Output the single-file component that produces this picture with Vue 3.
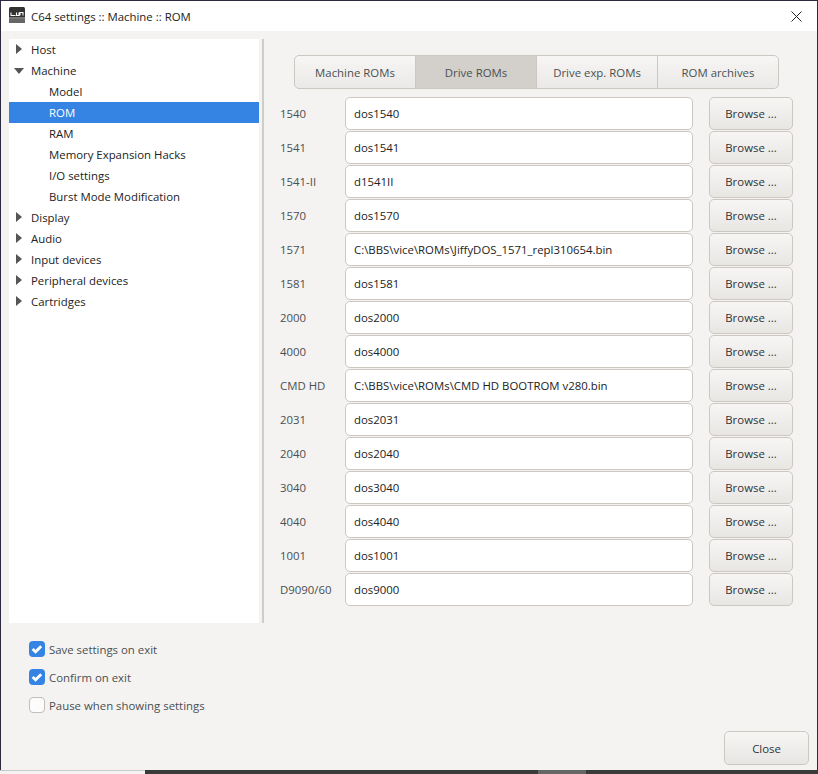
<script setup>
const tree = [
  { label: 'Host', arrow: 'right' },
  { label: 'Machine', arrow: 'down' },
  { label: 'Model', child: true },
  { label: 'ROM', child: true, active: true },
  { label: 'RAM', child: true },
  { label: 'Memory Expansion Hacks', child: true },
  { label: 'I/O settings', child: true },
  { label: 'Burst Mode Modification', child: true },
  { label: 'Display', arrow: 'right' },
  { label: 'Audio', arrow: 'right' },
  { label: 'Input devices', arrow: 'right' },
  { label: 'Peripheral devices', arrow: 'right' },
  { label: 'Cartridges', arrow: 'right' },
];

const tabs = ['Machine ROMs', 'Drive ROMs', 'Drive exp. ROMs', 'ROM archives'];

const roms = [
  ['1540', 'dos1540'],
  ['1541', 'dos1541'],
  ['1541-II', 'd1541II'],
  ['1570', 'dos1570'],
  ['1571', 'C:\\BBS\\vice\\ROMs\\JiffyDOS_1571_repl310654.bin'],
  ['1581', 'dos1581'],
  ['2000', 'dos2000'],
  ['4000', 'dos4000'],
  ['CMD HD', 'C:\\BBS\\vice\\ROMs\\CMD HD BOOTROM v280.bin'],
  ['2031', 'dos2031'],
  ['2040', 'dos2040'],
  ['3040', 'dos3040'],
  ['4040', 'dos4040'],
  ['1001', 'dos1001'],
  ['D9090/60', 'dos9000'],
];

const options = [
  { label: 'Save settings on exit', checked: true },
  { label: 'Confirm on exit', checked: true },
  { label: 'Pause when showing settings', checked: false },
];
</script>

<template>
  <div class="window">
    <!-- title bar -->
    <div class="titlebar">
      <svg class="app-icon" width="16" height="16" viewBox="0 0 16 16">
        <rect width="16" height="16" rx="1.5" fill="#333" />
        <rect y="10.5" width="16" height="1" fill="#bbb" />
        <rect y="12" width="16" height="4" fill="#666" />
        <path d="M2 5.5v3h4.5M7.5 5.5v3h2.5v-3M11 8.5v-3h3v3" fill="none" stroke="#fff" stroke-width="1.1" />
      </svg>
      <span class="title">C64 settings :: Machine :: ROM</span>
      <svg class="close-x" width="11" height="11" viewBox="0 0 11 11">
        <path d="M0.5 0.5l10 10M10.5 0.5l-10 10" stroke="#222" stroke-width="1" fill="none" />
      </svg>
    </div>

    <div class="content">
      <div class="main">
        <!-- settings tree -->
        <ul class="tree">
          <li
            v-for="item in tree"
            :key="item.label"
            class="tree-row"
            :class="{ child: item.child, active: item.active }"
          >
            <span v-if="item.arrow" class="arrow" :class="item.arrow"></span>
            {{ item.label }}
          </li>
        </ul>
        <div class="divider"></div>

        <div class="panel">
          <div class="tabs">
            <div
              v-for="tab in tabs"
              :key="tab"
              class="tab"
              :class="{ selected: tab === 'Drive ROMs' }"
            >
              {{ tab }}
            </div>
          </div>
          <div class="rom-grid">
            <div v-for="rom in roms" :key="rom[0]" class="rom-row">
              <span class="rom-label">{{ rom[0] }}</span>
              <input class="rom-input" type="text" :value="rom[1]" />
              <button class="btn browse">Browse ...</button>
            </div>
          </div>
        </div>
      </div>

      <div class="footer">
        <div class="options">
          <label v-for="opt in options" :key="opt.label" class="option">
            <span class="check" :class="{ on: opt.checked }">
              <svg v-if="opt.checked" width="16" height="16" viewBox="0 0 16 16">
                <path d="M3.6 8l3 2.8 5.6-5.6" fill="none" stroke="#fff" stroke-width="2.8" />
              </svg>
            </span>
            <span>{{ opt.label }}</span>
          </label>
        </div>
        <button class="btn close">Close</button>
      </div>
    </div>

    <!-- bit of the desktop below the window -->
    <div class="strip">
      <div class="strip-left"></div>
      <div class="strip-dark"></div>
      <div class="strip-thumb"></div>
      <div class="strip-end"></div>
    </div>
  </div>
</template>

<style>
html,
body {
  margin: 0;
  background: #2c2a3e;
}
</style>

<style scoped>
.window {
  width: 818px;
  height: 774px;
  box-sizing: border-box;
  display: flex;
  flex-direction: column;
  padding: 1px 1px 0 1px;
  background: #2c2a3e;
  font-family: "Open Sans", "Noto Sans", sans-serif;
  font-size: 11.4px;
  color: #2e3436;
  overflow: hidden;
}

.titlebar {
  height: 30px;
  flex: none;
  display: flex;
  align-items: center;
  background: #fff;
  padding: 0 15px 0 8px;
}
.app-icon {
  margin: 0 6px 2px 0;
}
.title {
  flex: 1;
  color: #222;
}

.content {
  flex: 1;
  display: flex;
  flex-direction: column;
  background: #f4f3f2;
  padding: 8px 8px 5px 8px;
}

.main {
  display: flex;
  height: 584px;
}

.tree {
  list-style: none;
  margin: 0;
  padding: 0;
  width: 250px;
  background: #fff;
  color: #222;
}
.tree-row {
  height: 21px;
  line-height: 21px;
  padding-left: 22px;
  position: relative;
}
.tree-row.child {
  padding-left: 40px;
}
.tree-row.active {
  background: #3584e4;
  color: #fff;
}
.arrow {
  position: absolute;
  width: 0;
  height: 0;
}
.arrow.right {
  left: 7px;
  top: 5px;
  border-top: 5.5px solid transparent;
  border-bottom: 5.5px solid transparent;
  border-left: 6px solid #555;
}
.arrow.down {
  left: 5px;
  top: 8px;
  border-left: 5.5px solid transparent;
  border-right: 5.5px solid transparent;
  border-top: 6px solid #555;
}

.divider {
  width: 2px;
  margin-left: 3px;
  background: #cfcdca;
}

.panel {
  flex: 1;
  padding: 16px 0 0 16px;
}

.tabs {
  display: flex;
  width: 485px;
  height: 34px;
  box-sizing: border-box;
  margin-left: 14px;
  border: 1px solid #cdc7c2;
  border-radius: 5px;
  background: linear-gradient(#f7f6f5, #ebe9e7);
  overflow: hidden;
}
.tab {
  flex: 1;
  display: flex;
  align-items: center;
  justify-content: center;
  color: #4a4f51;
  border-left: 1px solid #cdc7c2;
}
.tab:first-child {
  border-left: 0;
}
.tab.selected {
  background: #d3cfcb;
}

.rom-grid {
  display: flex;
  flex-direction: column;
  gap: 1px;
  margin-top: 8px;
}
.rom-row {
  display: flex;
  align-items: center;
  height: 33px;
}
.rom-label {
  width: 65px;
  color: #4a4f51;
}
.rom-input {
  width: 348px;
  height: 33px;
  box-sizing: border-box;
  border: 1px solid #cdc7c2;
  border-radius: 5px;
  background: #fff;
  padding: 0 8px;
  font: inherit;
  color: #222;
  outline: none;
}

.btn {
  box-sizing: border-box;
  border: 1px solid #cdc7c2;
  border-radius: 5px;
  background: linear-gradient(#f7f6f5, #e8e6e3);
  font: inherit;
  color: #2e3436;
  padding: 0;
}
.browse {
  width: 84px;
  height: 33px;
  margin-left: 16px;
}

.footer {
  flex: 1;
  position: relative;
  display: flex;
  justify-content: space-between;
  align-items: flex-end;
}
.options {
  align-self: flex-start;
  display: flex;
  flex-direction: column;
  gap: 8px;
  padding: 16px 0 0 20px;
}
.option {
  display: flex;
  align-items: center;
  height: 20px;
  gap: 4px;
  color: #4a4f51;
}
.check {
  width: 16px;
  height: 16px;
  box-sizing: border-box;
  border: 1px solid #c2bdb8;
  border-radius: 4px;
  background: #fcfcfc;
  display: block;
}
.check.on {
  background: #3584e4;
  border: 0;
}
.check svg {
  display: block;
}
.close {
  width: 85px;
  height: 34px;
  margin-right: 0;
}

.strip {
  flex: none;
  height: 4px;
  display: flex;
  margin: 0 -1px;
}
.strip-left {
  width: 145px;
  background: #f4f3f2;
  border-top: 1px solid #c9c9c9;
  box-sizing: border-box;
}
.strip-dark {
  width: 393px;
  background: #3a3a3a;
}
.strip-thumb {
  width: 48px;
  background: #666;
}
.strip-end {
  flex: 1;
  background: #3a3a3a;
}
</style>
